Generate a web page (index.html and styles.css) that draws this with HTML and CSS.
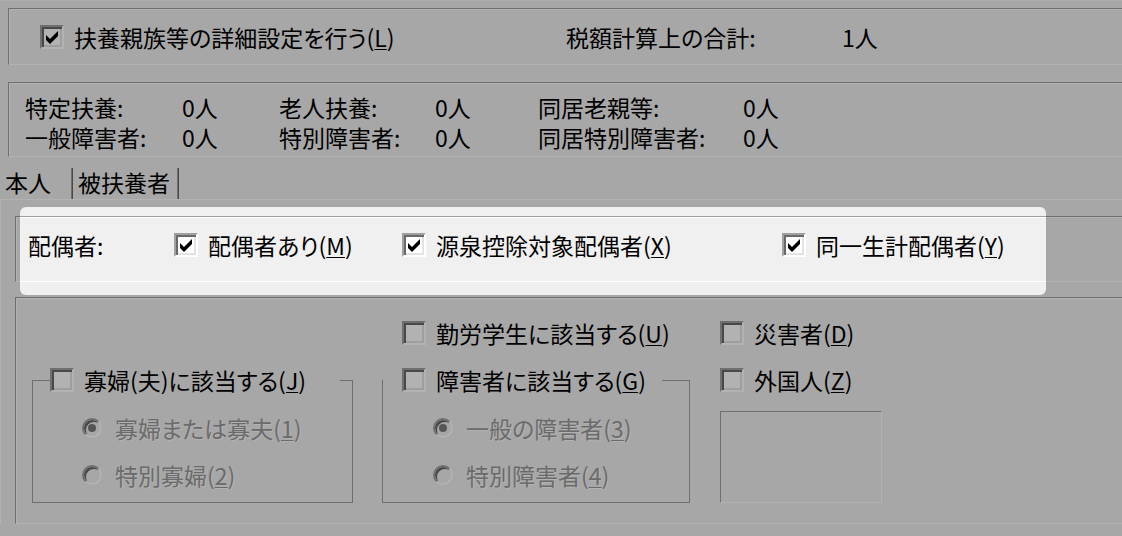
FILE: index.html
```html
<!DOCTYPE html>
<html lang="ja">
<head>
  <meta charset="UTF-8">
  <title>扶養控除等の設定</title>
  <link rel="stylesheet" href="styles.css">
</head>
<body>
  <div class="page">
    <div class="group g-top">
      <div class="row">
        <label class="check w-detail"><span class="cb"><svg viewBox="0 0 20 20" width="20" height="20"><polygon points="4,8 8,12 16,4 16,9 8,17 4,13"/></svg></span>扶養親族等の詳細設定を行う(<u>L</u>)</label>
        <span class="total-label">税額計算上の合計:</span>
        <span>1人</span>
      </div>
    </div>

    <div class="group g-counts">
      <div class="counts">
        <span>特定扶養:</span><span>0人</span>
        <span>老人扶養:</span><span>0人</span>
        <span>同居老親等:</span><span>0人</span>
        <span>一般障害者:</span><span>0人</span>
        <span>特別障害者:</span><span>0人</span>
        <span>同居特別障害者:</span><span>0人</span>
      </div>
    </div>

    <div class="tabs">
      <div class="tab active">本人</div>
      <div class="tab">被扶養者</div>
    </div>

    <div class="panel">
      <div class="group g-spouse">
        <div class="row">
          <span class="w-spouse">配偶者:</span>
          <label class="check w-has"><span class="cb"><svg viewBox="0 0 20 20" width="20" height="20"><polygon points="4,8 8,12 16,4 16,9 8,17 4,13"/></svg></span>配偶者あり(<u>M</u>)</label>
          <label class="check w-source"><span class="cb"><svg viewBox="0 0 20 20" width="20" height="20"><polygon points="4,8 8,12 16,4 16,9 8,17 4,13"/></svg></span>源泉控除対象配偶者(<u>X</u>)</label>
          <label class="check"><span class="cb"><svg viewBox="0 0 20 20" width="20" height="20"><polygon points="4,8 8,12 16,4 16,9 8,17 4,13"/></svg></span>同一生計配偶者(<u>Y</u>)</label>
        </div>
      </div>

      <div class="group g-flags">
        <div class="col col-a">
          <fieldset class="frame frame-widow">
            <legend class="check"><span class="cb"></span>寡婦(夫)に該当する(<u>J</u>)</legend>
            <div class="radios">
              <div class="radio"><span class="rb on"></span><span class="dim">寡婦または寡夫(<u>1</u>)</span></div>
              <div class="radio"><span class="rb"></span><span class="dim">特別寡婦(<u>2</u>)</span></div>
            </div>
          </fieldset>
        </div>

        <div class="col col-b">
          <label class="check"><span class="cb"></span>勤労学生に該当する(<u>U</u>)</label>
          <fieldset class="frame frame-disabled">
            <legend class="check"><span class="cb"></span>障害者に該当する(<u>G</u>)</legend>
            <div class="radios">
              <div class="radio"><span class="rb on"></span><span class="dim">一般の障害者(<u>3</u>)</span></div>
              <div class="radio"><span class="rb"></span><span class="dim">特別障害者(<u>4</u>)</span></div>
            </div>
          </fieldset>
        </div>

        <div class="col col-c">
          <label class="check"><span class="cb"></span>災害者(<u>D</u>)</label>
          <label class="check"><span class="cb"></span>外国人(<u>Z</u>)</label>
          <div class="blank"></div>
        </div>
      </div>
    </div>
  </div>

  <div class="spotlight"></div>
</body>
</html>
```

FILE: styles.css
```css
html, body { overflow: hidden; }
body {
  margin: 0;
  background: #f0f0f0;
  color: #000;
  font-family: "Noto Sans CJK JP", "Noto Sans", sans-serif;
  font-size: 23px;
  font-feature-settings: "palt";
}
.page { width: 1240px; position: relative; border-top: 1px solid #fafafa; }

.group {
  border-top: 1px solid #a0a0a0;
  border-left: 1px solid #a0a0a0;
  border-bottom: 1px solid #fff;
  box-shadow: inset 1px 1px 0 #fff;
}
.row { display: flex; align-items: center; height: 24px; }

u { text-decoration-thickness: 1px; text-underline-offset: 2px; }

.check { display: flex; align-items: center; height: 24px; line-height: 24px; white-space: nowrap; }
.cb {
  box-sizing: border-box;
  width: 24px;
  height: 24px;
  flex: none;
  margin-right: 10px;
  border: 2px solid;
  border-color: #a0a0a0 #fff #fff #a0a0a0;
  box-shadow: inset 2px 2px 0 #696969, inset -2px -2px 0 #e3e3e3;
  background: #fff;
}
.cb svg { display: block; }

/* top */
.g-top { margin: 7px 0 0 8px; padding: 16px 0 15px 31px; }
.w-detail { width: 526px; }
.total-label { width: 276px; }

.g-counts { margin: 17px 0 0 8px; padding: 9px 0 4px 16px; }
.counts {
  display: grid;
  grid-template-columns: 157px 97px 156px 103px 205px auto;
  grid-auto-rows: 30px;
  line-height: 30px;
  white-space: nowrap;
}

/* tabs */
.tabs { display: flex; margin-top: 11px; height: 31px; }
.tab {
  box-sizing: border-box;
  height: 31px;
  line-height: 29px;
  padding-left: 5px;
  border-right: 1px solid #696969;
  box-shadow: inset -1px 0 0 #a0a0a0;
}
.tab.active { width: 73px; padding-left: 5px; }
.tab + .tab { width: 106px; }

.panel { border-top: 1px solid #fff; border-left: 1px solid #fff; }

.g-spouse { margin: 16px 0 0 14px; padding: 16px 0 24px 12px; }
.w-spouse { width: 146px; }
.w-has { width: 228px; }
.w-source { width: 380px; }

.g-flags { display: flex; align-items: flex-start; margin: 15px 0 0 14px; padding: 23px 0 20px 16px; }
.col { display: flex; flex-direction: column; }
.col-a { width: 321px; padding-top: 47px; }
.col-b { width: 308px; margin-left: 29px; }
.col-b .check { padding-left: 20px; }
.col-c { width: 162px; margin-left: 30px; gap: 23px; }

.frame {
  margin: 0;
  padding: 0 0 15px 0;
  min-width: 0;
  border: 1px solid #a0a0a0;
}
.frame legend { padding: 0; box-sizing: border-box; }
.frame-widow legend { margin-left: 17px; width: 290px; }
.col-b .frame { margin-top: 23px; }
.col-b .frame legend { margin-left: 0; padding-left: 19px; width: 279px; }

.radios { display: flex; flex-direction: column; gap: 23px; padding-top: 24px; }
.frame-widow .radios { padding-left: 49px; }
.frame-disabled .radios { padding-left: 50px; }
.radio { display: flex; align-items: center; height: 24px; line-height: 24px; white-space: nowrap; }
.rb {
  position: relative;
  box-sizing: border-box;
  width: 20px;
  height: 20px;
  flex: none;
  margin-right: 13px;
  border-radius: 50%;
  border: 2px solid;
  border-color: #a0a0a0 #fff #fff #a0a0a0;
  box-shadow: inset 2px 2px 0 #696969;
  background: #f0f0f0;
}
.rb.on::after {
  content: "";
  position: absolute;
  left: 4px;
  top: 4px;
  width: 8px;
  height: 8px;
  border-radius: 50%;
  background: #7a7a7a;
}
.dim { color: #9a9a9a; text-shadow: 1px 1px 0 #fff; }

.blank {
  box-sizing: border-box;
  width: 162px;
  height: 92px;
  margin-top: -4px;
  border-top: 1px solid #a0a0a0;
  border-left: 1px solid #a0a0a0;
  border-right: 1px solid #fff;
  border-bottom: 1px solid #fff;
}

/* dimmed overlay with a hole over the spouse row */
.spotlight {
  position: absolute;
  left: 20px;
  top: 207px;
  width: 1026px;
  height: 88px;
  border-radius: 6px;
  box-shadow: 0 0 0 3000px rgba(0, 0, 0, 0.3);
  pointer-events: none;
}
```
